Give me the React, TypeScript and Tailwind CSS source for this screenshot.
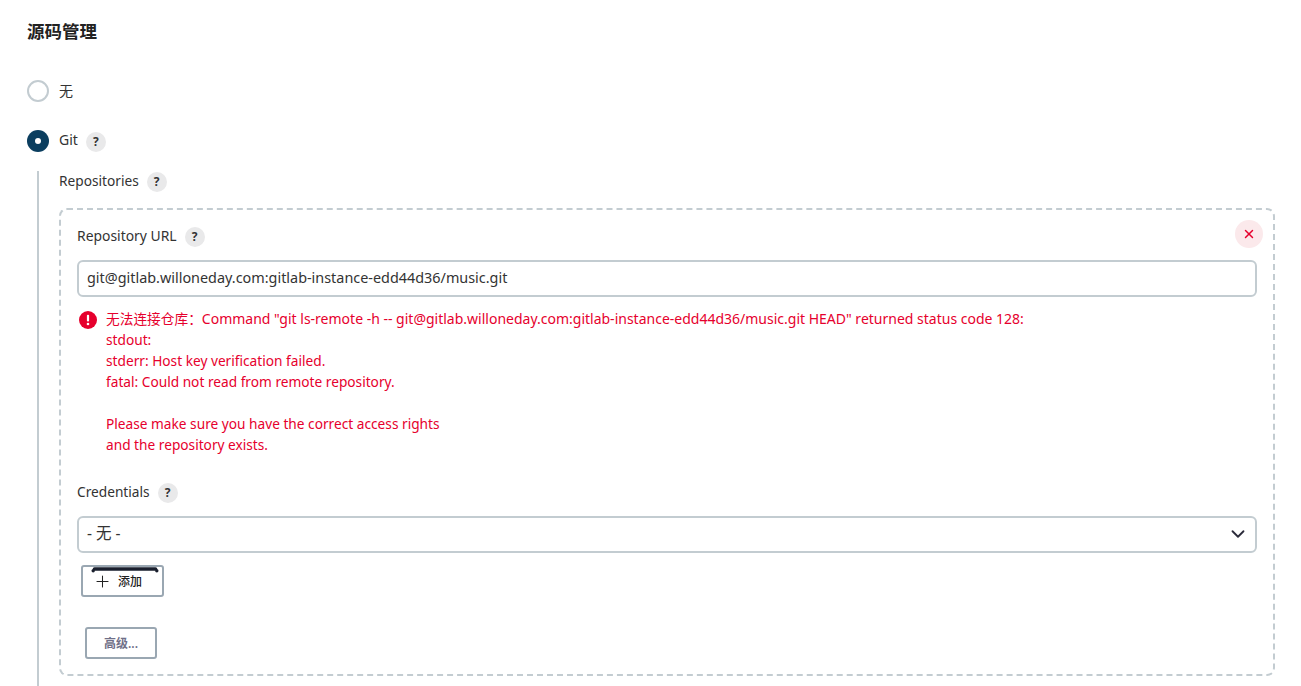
import { Plus, X, ChevronDown } from 'lucide-react'

const font = { fontFamily: '"Noto Sans", "Noto Sans CJK SC", sans-serif' }

function Help() {
  return (
    <span className="ml-2 mt-[2px] inline-flex h-5 w-5 shrink-0 items-center justify-center rounded-full bg-[#e9e9ea] text-[12px] font-bold leading-none text-[#333]">
      ?
    </span>
  )
}

function Label({ text, size = 'text-[13.7px]' }: { text: string; size?: string }) {
  return (
    <div className={`flex h-5 items-center leading-5 text-[#333] ${size}`}>
      <span>{text}</span>
      <Help />
    </div>
  )
}

const errorLines = [
  'stdout:',
  'stderr: Host key verification failed.',
  'fatal: Could not read from remote repository.',
  '',
  'Please make sure you have the correct access rights',
  'and the repository exists.',
]

export default function App() {
  return (
    <div style={font} className="h-[686px] overflow-hidden bg-white pl-[27px] pr-[26px] pt-[19px] text-[#333]">
      <h2 className="text-[17.5px] font-bold leading-6 text-[#222]">源码管理</h2>

      {/* Radios */}
      <div className="mt-[37px] flex h-[22px] items-center">
        <span className="h-[22px] w-[22px] rounded-full border-2 border-[#c3ccd1]" />
        <span className="ml-[10px] text-[14px] leading-5">无</span>
      </div>
      <div className="mt-[28px] flex h-[22px] items-center">
        <span className="flex h-[22px] w-[22px] items-center justify-center rounded-full bg-[#0b3e5f]">
          <span className="h-[6px] w-[6px] rounded-full bg-white" />
        </span>
        <span className="mb-[2px] ml-[10px] text-[14px] leading-5">Git</span>
        <Help />
      </div>

      {/* Nested block */}
      <div className="ml-[10px] mt-[19px] h-[600px] border-l-2 border-[#c3ccd1] pl-[20px]">
        <Label text="Repositories" />

        <div className="relative mt-[17px] h-[468px] rounded-[8px] border-2 border-dashed border-[#c3ccd1] px-[16px] pt-[16px]">
          <button className="absolute right-[10px] top-[10px] flex h-7 w-7 items-center justify-center rounded-full bg-[#fbe9eb] text-[#e6002d]">
            <X size={14} strokeWidth={2.5} />
          </button>

          <Label text="Repository URL" size="text-[13.9px]" />
          <div className="mt-[14px] flex h-[37px] items-center rounded-[6px] border-2 border-[#c3ccd1] px-2 pb-[2px] text-[14.4px] text-[#333]">
            git@gitlab.willoneday.com:gitlab-instance-edd44d36/music.git
          </div>

          {/* Validation error */}
          <div className="mt-[11px] flex pl-[2px] leading-[21px] text-[#e6002d]">
            <svg width="18" height="18" viewBox="0 0 18 18" className="mt-[3px] shrink-0">
              <circle cx="9" cy="9" r="9" fill="#e6002d" />
              <rect x="7.9" y="3.8" width="2.2" height="6.8" rx="1" fill="#fff" />
              <circle cx="9" cy="13" r="1.3" fill="#fff" />
            </svg>
            <div className="ml-[9px] text-[13.7px]">
              <div className="h-[21px] whitespace-nowrap">
                无法连接仓库：
                <span className="text-[14px]">
                  Command "git ls-remote -h -- git@gitlab.willoneday.com:gitlab-instance-edd44d36/music.git HEAD" returned status code 128:
                </span>
              </div>
              {errorLines.map((line, i) => (
                <div key={i} className="h-[21px] whitespace-nowrap">
                  {line}
                </div>
              ))}
            </div>
          </div>

          <div className="mt-[27px]">
            <Label text="Credentials" />
          </div>
          <div className="mt-[14px] flex h-[37px] items-center justify-between rounded-[6px] border-2 border-[#c3ccd1] pl-2 pr-[6px] text-[15.5px] text-[#333]">
            <span className="mb-[2px]">- 无 -</span>
            <ChevronDown size={22} strokeWidth={2} className="-mt-[2px] text-[#2b2b3a]" />
          </div>

          <button className="relative ml-[4px] mt-[12px] flex h-[32px] w-[83px] items-center rounded-[3px] border-2 border-[#9aa7b2] pl-[10px] pt-[1px] text-[12px] font-medium text-[#222]">
            <svg width="68" height="6" viewBox="0 0 68 6" className="absolute left-[8px] top-0">
              <path d="M3.5 2 H64.5" fill="none" stroke="#1a1f2e" strokeWidth="3.6" strokeLinecap="round" />
              <circle cx="2.2" cy="3.8" r="1.7" fill="#1a1f2e" />
              <circle cx="65.8" cy="3.8" r="1.7" fill="#1a1f2e" />
            </svg>
            <Plus size={19} strokeWidth={1.3} />
            <span className="ml-[6px]">添加</span>
          </button>

          <button className="ml-[8px] mt-[30px] flex h-[32px] w-[72px] items-center justify-center rounded-[3px] border-2 border-[#9aa7b2] pt-[2px] text-[12px] font-semibold text-[#6f6f88]">
            高级...
          </button>
        </div>
      </div>
    </div>
  )
}
